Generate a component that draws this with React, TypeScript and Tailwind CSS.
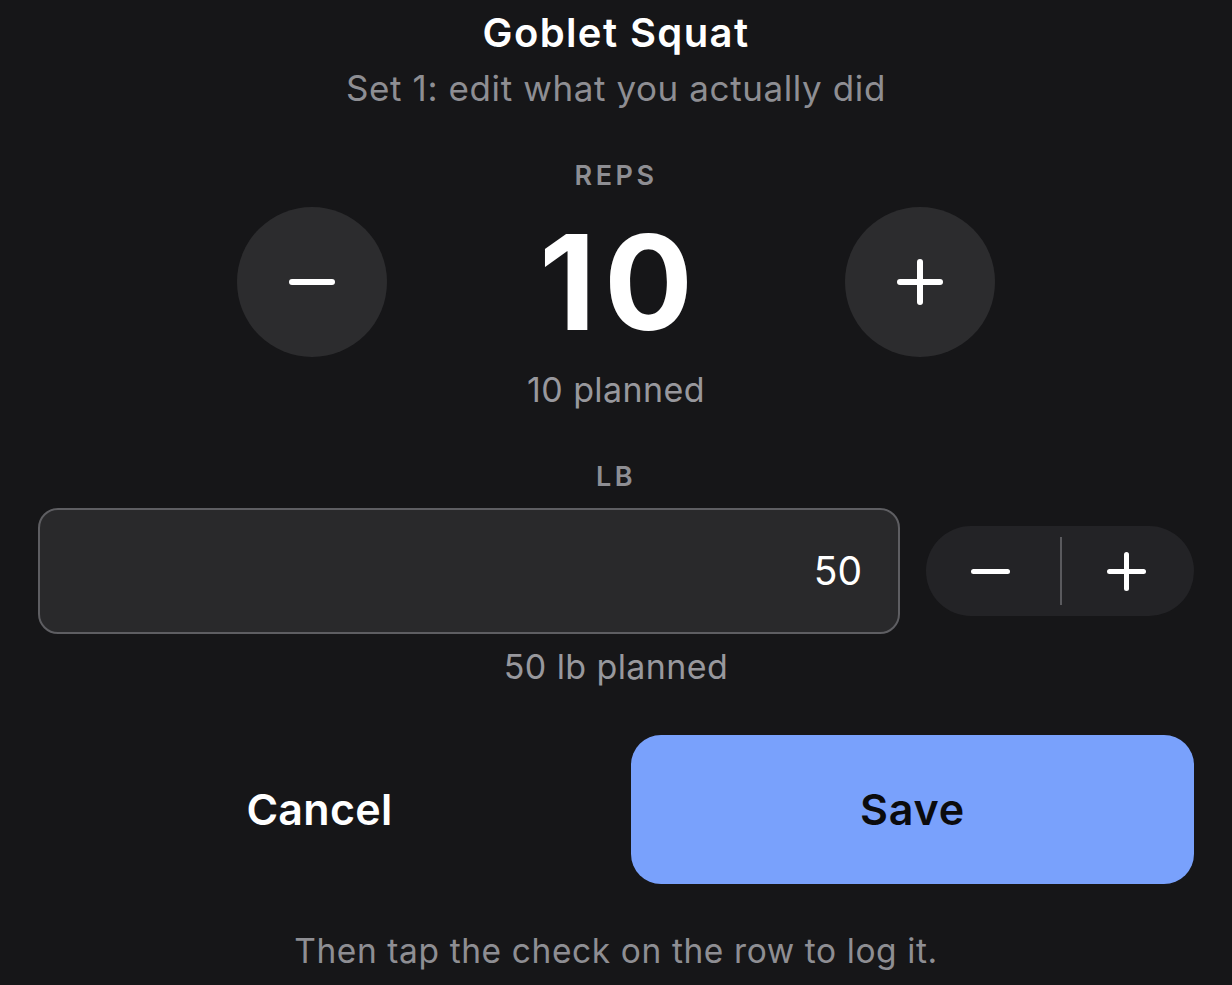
import React from 'react';

const font = { fontFamily: 'Inter, "Noto Sans", sans-serif' };

function Minus({ size, stroke }: { size: number; stroke: number }) {
  return (
    <svg width={size} height={size} viewBox={`0 0 ${size} ${size}`}>
      <line x1={stroke / 2} y1={size / 2} x2={size - stroke / 2} y2={size / 2} stroke="white" strokeWidth={stroke} strokeLinecap="round" />
    </svg>
  );
}

function Plus({ size, stroke }: { size: number; stroke: number }) {
  return (
    <svg width={size} height={size} viewBox={`0 0 ${size} ${size}`}>
      <line x1={stroke / 2} y1={size / 2} x2={size - stroke / 2} y2={size / 2} stroke="white" strokeWidth={stroke} strokeLinecap="round" />
      <line x1={size / 2} y1={stroke / 2} x2={size / 2} y2={size - stroke / 2} stroke="white" strokeWidth={stroke} strokeLinecap="round" />
    </svg>
  );
}

export default function App() {
  return (
    <div className="w-[1232px] h-[985px] bg-[#161618] overflow-hidden flex flex-col items-center px-[38px]" style={font}>
      <h1 className="mt-[10px] h-[46px] leading-[46px] text-[40px] font-semibold text-white tracking-[1.4px]">Goblet Squat</h1>
      <p className="mt-[12px] h-[40px] leading-[40px] text-[35px] text-[#8e8e93] tracking-[0.6px]">Set 1: edit what you actually did</p>

      <div className="mt-[52px] h-[32px] leading-[32px] text-[27px] font-semibold tracking-[3.5px] text-[#8e8e93]">REPS</div>

      <div className="mt-[15px] flex items-center">
        <button className="w-[150px] h-[150px] rounded-full bg-[#2c2c2e] flex items-center justify-center">
          <Minus size={46} stroke={6} />
        </button>
        <div className="w-[458px] pl-[8px] text-center text-[132px] leading-[150px] font-bold text-white tracking-[8px]">10</div>
        <button className="w-[150px] h-[150px] rounded-full bg-[#2c2c2e] flex items-center justify-center">
          <Plus size={46} stroke={6} />
        </button>
      </div>

      <p className="mt-[13px] h-[40px] leading-[40px] text-[34px] text-[#98989d] tracking-[0.4px]">10 planned</p>

      <div className="mt-[51px] h-[32px] leading-[32px] text-[27px] font-semibold tracking-[3.5px] text-[#8e8e93]">LB</div>

      <div className="mt-[15px] w-full flex items-center gap-[26px]">
        <div className="flex-1 h-[126px] rounded-[20px] border-2 border-[#5e5e62] bg-[#29292b] flex items-center justify-end pr-[36px]">
          <span className="text-[39px] text-white">50</span>
        </div>
        <div className="w-[268px] h-[90px] rounded-full bg-[#232326] flex items-center">
          <div className="flex-1 flex items-center justify-center pr-[6px]">
            <Minus size={39} stroke={5} />
          </div>
          <div className="w-[2px] h-[68px] bg-[#5a5a5e]"></div>
          <div className="flex-1 flex items-center justify-center pr-[4px]">
            <Plus size={39} stroke={5} />
          </div>
        </div>
      </div>

      <p className="mt-[13px] h-[40px] leading-[40px] text-[34px] text-[#98989d] tracking-[0.4px]">50 lb planned</p>

      <div className="mt-[48px] w-full grid grid-cols-2 gap-[30px]">
        <button className="h-[149px] flex items-center justify-center text-[43px] font-semibold text-white tracking-[0.3px]">Cancel</button>
        <button className="h-[149px] rounded-[30px] bg-[#79a1fc] flex items-center justify-center text-[43px] font-semibold text-[#0b0b0d] tracking-[0.8px]">Save</button>
      </div>

      <p className="mt-[47px] h-[40px] leading-[40px] text-[33.5px] text-[#8e8e93] tracking-[0.6px]">Then tap the check on the row to log it.</p>
    </div>
  );
}
